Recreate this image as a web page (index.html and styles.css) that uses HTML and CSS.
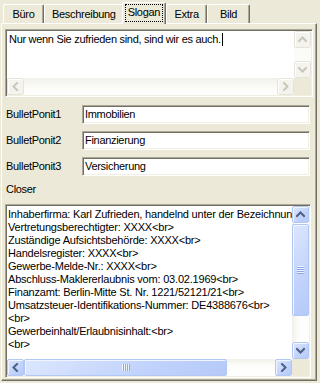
FILE: index.html
```html
<!DOCTYPE html>
<html>
<head>
<meta charset="utf-8">
<link rel="stylesheet" href="styles.css">
</head>
<body>
<div class="tabs">
  <div class="tab">Büro</div>
  <div class="tab">Beschreibung</div>
  <div class="tab active"><span class="focus">Slogan</span></div>
  <div class="tab">Extra</div>
  <div class="tab">Bild</div>
</div>
<div class="panel">
  <div class="memo memo-slogan">
    <div class="memo-text">Nur wenn Sie zufrieden sind, sind wir es auch.<span class="caret"></span></div>
    <div class="vscroll off">
      <div class="sbtn"><svg width="9" height="9" viewBox="0 0 9 9"><polyline points="1,6 4.5,2.5 8,6" /></svg></div>
      <div class="track"></div>
      <div class="sbtn"><svg width="9" height="9" viewBox="0 0 9 9"><polyline points="1,3 4.5,6.5 8,3" /></svg></div>
    </div>
    <div class="hscroll off">
      <div class="sbtn"><svg width="9" height="9" viewBox="0 0 9 9"><polyline points="6,1 2.5,4.5 6,8" /></svg></div>
      <div class="track"></div>
      <div class="sbtn"><svg width="9" height="9" viewBox="0 0 9 9"><polyline points="3,1 6.5,4.5 3,8" /></svg></div>
    </div>
    <div class="corner"></div>
  </div>

  <div class="field"><span class="label">BulletPonit1</span><div class="edit">Immobilien</div></div>
  <div class="field"><span class="label">BulletPonit2</span><div class="edit">Finanzierung</div></div>
  <div class="field"><span class="label">BulletPonit3</span><div class="edit">Versicherung</div></div>

  <div class="closer-label">Closer</div>
  <div class="memo memo-closer">
    <div class="memo-text">Inhaberfirma: Karl Zufrieden, handelnd unter der Bezeichnung
Vertretungsberechtigter: XXXX&lt;br&gt;
Zuständige Aufsichtsbehörde: XXXX&lt;br&gt;
Handelsregister: XXXX&lt;br&gt;
Gewerbe-Melde-Nr.: XXXX&lt;br&gt;
Abschluss-Maklererlaubnis vom: 03.02.1969&lt;br&gt;
Finanzamt: Berlin-Mitte St. Nr. 1221/52121/21&lt;br&gt;
Umsatzsteuer-Identifikations-Nummer: DE4388676&lt;br&gt;
&lt;br&gt;
Gewerbeinhalt/Erlaubnisinhalt:&lt;br&gt;
&lt;br&gt;</div>
    <div class="vscroll on">
      <div class="sbtn"><svg width="9" height="9" viewBox="0 0 9 9"><polyline points="1,6 4.5,2.5 8,6" /></svg></div>
      <div class="track">
        <div class="thumb thumb-v"><span class="grip"></span></div>
      </div>
      <div class="sbtn"><svg width="9" height="9" viewBox="0 0 9 9"><polyline points="1,3 4.5,6.5 8,3" /></svg></div>
    </div>
    <div class="hscroll on">
      <div class="sbtn"><svg width="9" height="9" viewBox="0 0 9 9"><polyline points="6,1 2.5,4.5 6,8" /></svg></div>
      <div class="track">
        <div class="thumb thumb-h"><span class="grip"></span></div>
      </div>
      <div class="sbtn"><svg width="9" height="9" viewBox="0 0 9 9"><polyline points="3,1 6.5,4.5 3,8" /></svg></div>
    </div>
    <div class="corner"></div>
  </div>
</div>
</body>
</html>
```

FILE: styles.css
```css
* { box-sizing: border-box; }
html, body { margin: 0; padding: 0; }
body {
  width: 320px;
  height: 383px;
  overflow: hidden;
  background: #ECE9D8;
  font: 11px "Liberation Sans", Arial, sans-serif;
  letter-spacing: -0.3px;
  color: #000;
}

/* tabs */
.tabs {
  display: flex;
  align-items: flex-end;
  height: 23px;
  padding-left: 3px;
  position: relative;
  z-index: 2;
}
.tab {
  height: 19px;
  padding: 3px 7px 0 7px;
  min-width: 41px;
  text-align: center;
  line-height: 13px;
  border-top: 1px solid #fff;
  border-left: 1px solid #fff;
  border-right: 1px solid #716F64;
  box-shadow: inset -1px 0 #ACA899;
  border-radius: 2px 2px 0 0;
  background: #ECE9D8;
  white-space: nowrap;
}
.tab:last-child { min-width: 43px; }
.tab.active {
  height: 22px;
  margin: 0 -1px -1px -2px;
  padding: 2px 3px 0 3px;
  position: relative;
}
.tab.active + .tab { margin-left: 1px; }
.focus {
  display: inline-block;
  outline: 1px dotted #000;
  outline-offset: 0;
  padding: 1px 2px 2px 2px;
  line-height: 13px;
}

/* panel */
.panel {
  margin-left: 1px;
  width: 316px;
  height: 358px;
  border-top: 1px solid #fff;
  border-left: 1px solid #fff;
  border-right: 1px solid #716F64;
  border-bottom: 1px solid #716F64;
  box-shadow: inset -1px -1px #ACA899;
  padding: 5px 0 0 3px;
  position: relative;
  z-index: 1;
}

/* memos */
.memo {
  display: grid;
  grid-template-columns: 1fr 17px;
  grid-template-rows: 1fr 17px;
  background: #fff;
  border: 1px solid;
  border-color: #ACA899 #fff #fff #ACA899;
  box-shadow: inset 1px 1px #716F64, inset -1px -1px #F1EFE2;
  padding: 1px;
  overflow: hidden;
}
.memo-slogan { width: 308px; height: 68px; }
.memo-closer { width: 306px; height: 174px; }
.memo-text {
  white-space: pre;
  overflow: hidden;
  line-height: 13px;
  padding: 2px 0 0 2px;
  min-width: 0;
}
.memo-closer .memo-text { padding-top: 2px; padding-left: 1px; letter-spacing: -0.2px; }
.caret {
  display: inline-block;
  width: 1px;
  height: 13px;
  background: #000;
  vertical-align: top;
  margin-left: 1px;
}

.vscroll, .hscroll { display: flex; }
.vscroll { flex-direction: column; grid-column: 2; grid-row: 1; }
.hscroll { grid-column: 1; grid-row: 2; }
.corner { grid-column: 2; grid-row: 2; background: #ECE9D8; }

.sbtn {
  width: 17px;
  height: 17px;
  flex: none;
  display: flex;
  align-items: center;
  justify-content: center;
  border-radius: 2px;
  border: 1px solid;
}
.sbtn svg polyline {
  fill: none;
  stroke-width: 2;
  stroke-linecap: square;
  stroke-linejoin: miter;
}
.track { flex: 1; position: relative; }
.vscroll .track { background: linear-gradient(to right, #F1F0EA, #FDFDFB 40%, #FEFEFE); }
.hscroll .track { background: linear-gradient(to bottom, #F1F0EA, #FDFDFB 40%, #FEFEFE); }

/* disabled */
.off .sbtn {
  background: #F4F3EE;
  border-color: #E6E4DA;
  box-shadow: inset 1px 1px #fff;
}
.off .sbtn svg polyline { stroke: #C9C7BA; }
.off .track { background: #FBFBF8; }
.off.hscroll .track { background: linear-gradient(to bottom, #F2F1EB, #FBFBF8 60%, #FEFEFE); }

/* enabled, blue */
.on .sbtn, .thumb {
  background: linear-gradient(135deg, #DCE6FE, #C1D3FB 60%, #B5CAF8);
  border: 1px solid #B2C7F3;
  box-shadow: inset 1px 1px #F1F5FE;
  border-radius: 2px;
}
.on .sbtn svg polyline { stroke: #4D6185; }
.thumb {
  position: absolute;
  display: flex;
  align-items: center;
  justify-content: center;
}
.thumb-v { left: 0; right: 0; top: 1px; height: 92px; }
.thumb-h { top: 0; bottom: 0; left: 0; width: 203px; }
.grip { display: block; }
.thumb-v .grip {
  width: 7px;
  height: 8px;
  background: repeating-linear-gradient(to bottom, #EEF4FE 0 1px, #8CA8E8 1px 2px);
}
.thumb-h .grip {
  width: 8px;
  height: 7px;
  background: repeating-linear-gradient(to right, #EEF4FE 0 1px, #8CA8E8 1px 2px);
}

/* fields */
.field {
  display: flex;
  align-items: center;
  height: 19px;
  margin-top: 7px;
  width: 305px;
}
.memo-slogan + .field { margin-top: 8px; }
.label { width: 77px; padding-left: 1px; line-height: 13px; }
.edit {
  width: 228px;
  height: 19px;
  background: #fff;
  border: 1px solid;
  border-color: #ACA899 #fff #fff #ACA899;
  box-shadow: inset 1px 1px #716F64, inset -1px -1px #F1EFE2;
  padding: 2px 0 0 2px;
  line-height: 13px;
  white-space: nowrap;
}

.closer-label {
  margin-top: 7px;
  padding-left: 1px;
  line-height: 13px;
  height: 13px;
  margin-bottom: 8px;
}
```
